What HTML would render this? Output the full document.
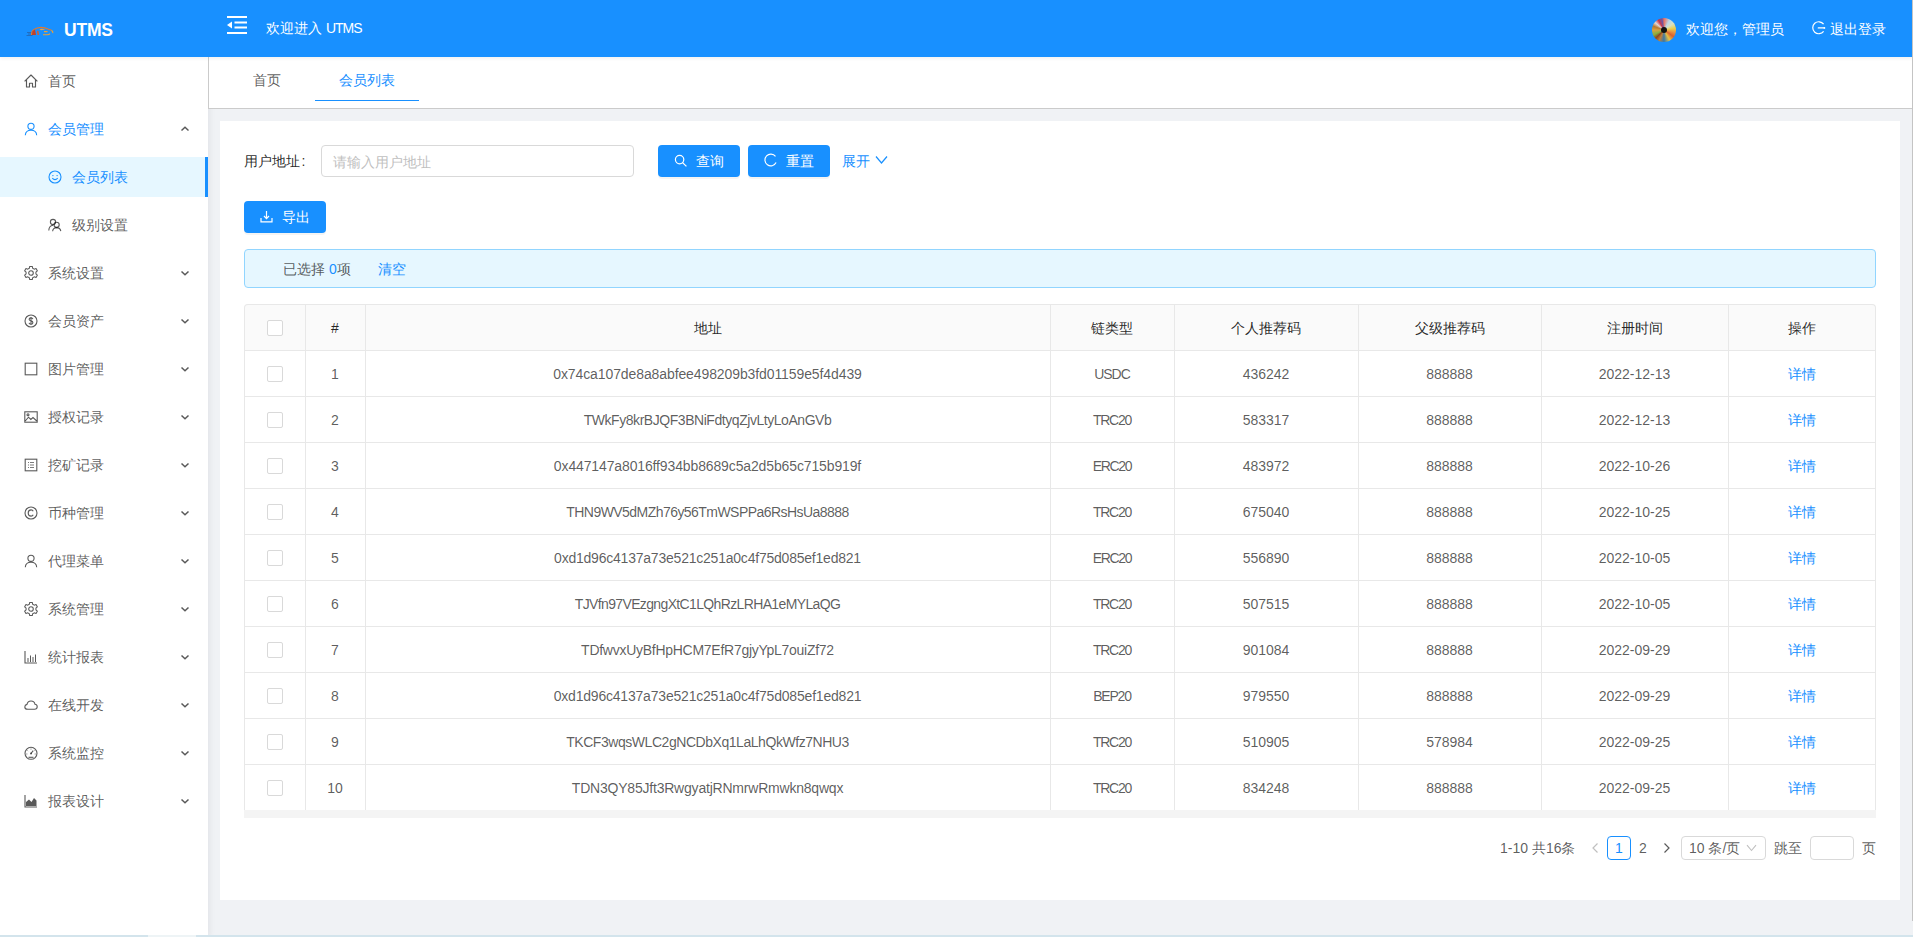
<!DOCTYPE html>
<html><head><meta charset="utf-8">
<style>
*{box-sizing:border-box;margin:0;padding:0}
html,body{width:1913px;height:937px;overflow:hidden}
body{position:relative;background:#f0f2f5;font-family:"Liberation Sans",sans-serif;font-size:14px;color:rgba(0,0,0,.65)}
.a{position:absolute;white-space:nowrap}
#hdr{left:0;top:0;width:1913px;height:57px;background:#1890ff;color:#fff;z-index:3;box-shadow:0 1px 4px rgba(0,21,41,.08)}
#side{left:0;top:57px;width:208px;height:880px;background:#fff;box-shadow:2px 0 6px rgba(0,21,41,.06)}
.mi{position:absolute;left:0;width:208px;height:40px;line-height:40px;font-size:14px;color:rgba(0,0,0,.65)}
.mi svg.ic{position:absolute;left:24px;top:13px;width:14px;height:14px}
.mi .tx{position:absolute;left:48px;top:0}
.mi svg.ar{position:absolute;left:180px;top:16px;width:10px;height:8px;color:rgba(0,0,0,.65)}
.mi.sub svg.ic{left:48px}
.mi.sub .tx{left:72px}
.mi.on{color:#1890ff}
#tabs{left:208px;top:57px;width:1705px;height:52px;background:#fff;border-bottom:1px solid #cbcbcb;border-left:1px solid #cbcbcb}
#card{left:220px;top:121px;width:1680px;height:779px;background:#fff}
.btn{position:absolute;height:32px;background:#1890ff;color:#fff;border-radius:4px;font-size:14px;line-height:32px;box-shadow:0 2px 0 rgba(0,0,0,.045)}
</style></head>
<body>
<div id="hdr" class="a">
  <svg class="a" style="left:26px;top:25px" width="28" height="12" viewBox="0 0 28 12">
    <path d="M1 7.5h5M2 9h5M0.5 10.5h6" stroke="#2a4a80" stroke-width=".7" opacity=".7"/>
    <path d="M5.5 10 Q5.5 6 8 4.5 Q11 2.6 15 2.4 Q19 2.4 22 4 L25.5 5.2" fill="none" stroke="#e07a30" stroke-width="1.2"/>
    <path d="M6 10 L6.5 6 L9 4.6 L10 10 Z" fill="#c0402a"/>
    <path d="M11 6 L11.5 10 L13 10 L12.5 5.8 Z" fill="#e05a28"/>
    <path d="M13.5 4.2 Q16 3.4 19.5 4.5 L15 5.2 Z" fill="#f0a040"/>
    <path d="M18 6.6 h3.5 M17 9.8 h4.5 Q23 9.8 24 8.6 M25.5 5.2 Q27.2 6.5 26.8 8.2" fill="none" stroke="#f0a030" stroke-width="1.1"/>
  </svg>
  <div class="a" style="left:64px;top:18px;font-size:17.5px;font-weight:bold;line-height:24px;letter-spacing:-.2px">UTMS</div>
  <svg class="a" style="left:227px;top:16px" width="20" height="18" viewBox="0 0 20 18">
    <rect x="0" y="0" width="20" height="2" fill="#fff"/>
    <rect x="7.5" y="5.5" width="12.5" height="2" fill="#fff"/>
    <rect x="7.5" y="10.5" width="12.5" height="2" fill="#fff"/>
    <rect x="0" y="16" width="20" height="2" fill="#fff"/>
    <path d="M0 9 L5 5.5 L5 12.5 Z" fill="#fff"/>
  </svg>
  <div class="a" style="left:266px;top:18px;line-height:20px;font-size:14px">欢迎进入 <span style="letter-spacing:-1px">UTMS</span></div>
  <div class="a" style="left:1652px;top:18px;width:24px;height:24px;border-radius:50%;background:conic-gradient(#e87060 0deg,#b8d8e8 30deg,#d8e0c0 55deg,#e8d050 80deg,#e89040 105deg,#d86030 125deg,#e8c040 150deg,#3a78a8 180deg,#c08038 205deg,#904820 225deg,#88b040 245deg,#d8a040 270deg,#b87830 290deg,#e0d8d8 310deg,#c83848 330deg,#6858a8 350deg,#e87060 360deg)"><div class="a" style="left:9px;top:9px;width:6px;height:6px;border-radius:50%;background:#111"></div></div>
  <div class="a" style="left:1686px;top:19px;line-height:20px;font-size:14px">欢迎您，管理员</div>
  <svg class="a" style="left:1812px;top:21px" width="14" height="14" viewBox="0 0 14 14">
    <path d="M11.6 3.2 A6 6 0 1 0 11.6 10.3" fill="none" stroke="#fff" stroke-width="1.2"/>
    <path d="M6.3 6.9 H12.3" fill="none" stroke="#fff" stroke-width="1.3" stroke-linecap="round"/>
    <circle cx="12.4" cy="6.9" r=".9" fill="#fff"/>
  </svg>
  <div class="a" style="left:1830px;top:19px;line-height:20px;font-size:14px">退出登录</div>
</div>

<div id="side" class="a">
<div class="mi" style="top:4px"><svg class="ic" viewBox="0 0 14 14"><path d="M0.6 7.4 L7 1 L13.4 7.4 M2.5 5.6 V13 H5.5 V9.2 H8.5 V13 H11.5 V5.6" fill="none" stroke="currentColor" stroke-width="1.15" stroke-linejoin="round"/></svg><span class="tx">首页</span></div>
<div class="mi on" style="top:52px"><svg class="ic" viewBox="0 0 14 14"><circle cx="7" cy="4.3" r="3.1" fill="none" stroke="currentColor" stroke-width="1.1"/><path d="M1.3 13.2 Q1.6 8.2 7 8.2 Q12.4 8.2 12.7 13.2" fill="none" stroke="currentColor" stroke-width="1.1"/></svg><span class="tx">会员管理</span><svg class="ar" viewBox="0 0 10 8"><path d="M1.5 5.5 L5 2.2 L8.5 5.5" fill="none" stroke="currentColor" stroke-width="1.5"/></svg></div>
<div class="mi sub on" style="top:100px;background:#e6f7ff"><svg class="ic" viewBox="0 0 14 14"><circle cx="7" cy="7" r="6" fill="none" stroke="currentColor" stroke-width="1.1"/><circle cx="4.9" cy="5.6" r=".7" fill="currentColor"/><circle cx="9.1" cy="5.6" r=".7" fill="currentColor"/><path d="M4.3 8.2 Q7 11 9.7 8.2" fill="none" stroke="currentColor" stroke-width="1.1"/></svg><span class="tx">会员列表</span><div class="a" style="left:205px;top:0;width:3px;height:40px;background:#1890ff"></div></div>
<div class="mi sub" style="top:148px"><svg class="ic" viewBox="0 0 14 14"><circle cx="5" cy="4" r="2.6" fill="none" stroke="currentColor" stroke-width="1.1"/><path d="M0.8 12.5 Q1 7.6 5 7.2" fill="none" stroke="currentColor" stroke-width="1.1"/><circle cx="8.6" cy="6.8" r="2.6" fill="none" stroke="currentColor" stroke-width="1.1"/><path d="M4.6 13.2 Q5 9.8 8.6 9.6 Q12.2 9.8 12.8 13.2" fill="none" stroke="currentColor" stroke-width="1.1"/></svg><span class="tx">级别设置</span></div>
<div class="mi" style="top:196px"><svg class="ic" viewBox="0 0 14 14"><path d="M5.29 2.30 L5.72 0.42 L8.28 0.42 L8.71 2.30 L10.21 3.17 L12.06 2.60 L13.33 4.82 L11.92 6.13 L11.92 7.87 L13.33 9.18 L12.06 11.40 L10.21 10.83 L8.71 11.70 L8.28 13.58 L5.72 13.58 L5.29 11.70 L3.79 10.83 L1.94 11.40 L0.67 9.18 L2.08 7.87 L2.08 6.13 L0.67 4.82 L1.94 2.60 L3.79 3.17 Z" fill="none" stroke="currentColor" stroke-width="1.05" stroke-linejoin="round"/><circle cx="7" cy="7" r="2.3" fill="none" stroke="currentColor" stroke-width="1.05"/></svg><span class="tx">系统设置</span><svg class="ar" viewBox="0 0 10 8"><path d="M1.5 2.5 L5 5.8 L8.5 2.5" fill="none" stroke="currentColor" stroke-width="1.5"/></svg></div>
<div class="mi" style="top:244px"><svg class="ic" viewBox="0 0 14 14"><circle cx="7" cy="7" r="6" fill="none" stroke="currentColor" stroke-width="1.1"/><path d="M8.9 5.1 Q8.5 3.9 7 3.9 Q5.1 3.9 5.1 5.3 Q5.1 6.5 7 6.9 Q8.9 7.3 8.9 8.7 Q8.9 10.1 7 10.1 Q5.3 10.1 5 8.8 M7 3 V11" fill="none" stroke="currentColor" stroke-width="1.1"/></svg><span class="tx">会员资产</span><svg class="ar" viewBox="0 0 10 8"><path d="M1.5 2.5 L5 5.8 L8.5 2.5" fill="none" stroke="currentColor" stroke-width="1.5"/></svg></div>
<div class="mi" style="top:292px"><svg class="ic" viewBox="0 0 14 14"><rect x="1.2" y="1.2" width="11.6" height="11.6" fill="none" stroke="currentColor" stroke-width="1.1"/></svg><span class="tx">图片管理</span><svg class="ar" viewBox="0 0 10 8"><path d="M1.5 2.5 L5 5.8 L8.5 2.5" fill="none" stroke="currentColor" stroke-width="1.5"/></svg></div>
<div class="mi" style="top:340px"><svg class="ic" viewBox="0 0 14 14"><rect x="0.8" y="1.8" width="12.4" height="10.4" fill="none" stroke="currentColor" stroke-width="1.1"/><path d="M1.2 11 L4.5 7.2 L6.8 9.5 L9 7.5 L12.8 11" fill="none" stroke="currentColor" stroke-width="1.1"/><circle cx="4" cy="4.8" r="1" fill="none" stroke="currentColor" stroke-width="1.1"/></svg><span class="tx">授权记录</span><svg class="ar" viewBox="0 0 10 8"><path d="M1.5 2.5 L5 5.8 L8.5 2.5" fill="none" stroke="currentColor" stroke-width="1.5"/></svg></div>
<div class="mi" style="top:388px"><svg class="ic" viewBox="0 0 14 14"><rect x="1.2" y="1.2" width="11.6" height="11.6" fill="none" stroke="currentColor" stroke-width="1.1"/><path d="M4 4.5 h1 M6 4.5 h4 M4 7 h1 M6 7 h4 M4 9.5 h1 M6 9.5 h4" stroke="currentColor" stroke-width=".8"/></svg><span class="tx">挖矿记录</span><svg class="ar" viewBox="0 0 10 8"><path d="M1.5 2.5 L5 5.8 L8.5 2.5" fill="none" stroke="currentColor" stroke-width="1.5"/></svg></div>
<div class="mi" style="top:436px"><svg class="ic" viewBox="0 0 14 14"><circle cx="7" cy="7" r="6" fill="none" stroke="currentColor" stroke-width="1.1"/><path d="M9.2 5.2 Q8.7 3.9 7.1 3.9 Q4.2 3.9 4.2 7 Q4.2 10.1 7.1 10.1 Q8.7 10.1 9.2 8.8" fill="none" stroke="currentColor" stroke-width="1.1"/></svg><span class="tx">币种管理</span><svg class="ar" viewBox="0 0 10 8"><path d="M1.5 2.5 L5 5.8 L8.5 2.5" fill="none" stroke="currentColor" stroke-width="1.5"/></svg></div>
<div class="mi" style="top:484px"><svg class="ic" viewBox="0 0 14 14"><circle cx="7" cy="4.3" r="3.1" fill="none" stroke="currentColor" stroke-width="1.1"/><path d="M1.3 13.2 Q1.6 8.2 7 8.2 Q12.4 8.2 12.7 13.2" fill="none" stroke="currentColor" stroke-width="1.1"/></svg><span class="tx">代理菜单</span><svg class="ar" viewBox="0 0 10 8"><path d="M1.5 2.5 L5 5.8 L8.5 2.5" fill="none" stroke="currentColor" stroke-width="1.5"/></svg></div>
<div class="mi" style="top:532px"><svg class="ic" viewBox="0 0 14 14"><path d="M5.29 2.30 L5.72 0.42 L8.28 0.42 L8.71 2.30 L10.21 3.17 L12.06 2.60 L13.33 4.82 L11.92 6.13 L11.92 7.87 L13.33 9.18 L12.06 11.40 L10.21 10.83 L8.71 11.70 L8.28 13.58 L5.72 13.58 L5.29 11.70 L3.79 10.83 L1.94 11.40 L0.67 9.18 L2.08 7.87 L2.08 6.13 L0.67 4.82 L1.94 2.60 L3.79 3.17 Z" fill="none" stroke="currentColor" stroke-width="1.05" stroke-linejoin="round"/><circle cx="7" cy="7" r="2.3" fill="none" stroke="currentColor" stroke-width="1.05"/></svg><span class="tx">系统管理</span><svg class="ar" viewBox="0 0 10 8"><path d="M1.5 2.5 L5 5.8 L8.5 2.5" fill="none" stroke="currentColor" stroke-width="1.5"/></svg></div>
<div class="mi" style="top:580px"><svg class="ic" viewBox="0 0 14 14"><path d="M1 1 V13 H13" fill="none" stroke="currentColor" stroke-width="1.1"/><path d="M4 12 V8 M6.5 12 V5.5 M9 12 V7 M11.5 12 V4.5" stroke="currentColor" stroke-width="1"/></svg><span class="tx">统计报表</span><svg class="ar" viewBox="0 0 10 8"><path d="M1.5 2.5 L5 5.8 L8.5 2.5" fill="none" stroke="currentColor" stroke-width="1.5"/></svg></div>
<div class="mi" style="top:628px"><svg class="ic" viewBox="0 0 14 14"><path d="M3.8 11.3 H10.6 Q13.2 11.3 13.2 8.8 Q13.2 6.6 11 6.3 Q10.4 3 7 3 Q3.6 3 3 6.4 Q0.8 6.9 0.8 9 Q0.8 11.3 3.8 11.3 Z" fill="none" stroke="currentColor" stroke-width="1.1"/></svg><span class="tx">在线开发</span><svg class="ar" viewBox="0 0 10 8"><path d="M1.5 2.5 L5 5.8 L8.5 2.5" fill="none" stroke="currentColor" stroke-width="1.5"/></svg></div>
<div class="mi" style="top:676px"><svg class="ic" viewBox="0 0 14 14"><circle cx="7" cy="7.3" r="6" fill="none" stroke="currentColor" stroke-width="1.1"/><path d="M7 7.5 L9.2 4.6" fill="none" stroke="currentColor" stroke-width="1.1"/><circle cx="7" cy="7.6" r="1" fill="currentColor"/><path d="M3.3 4.5 l.6 .6 M7 2.6 v.9 M10.7 4.5 l-.6 .6 M2.4 8 h.9 M10.7 8 h.9" stroke="currentColor" stroke-width=".9"/><path d="M4.5 11.3 h5" fill="none" stroke="currentColor" stroke-width="1.1"/></svg><span class="tx">系统监控</span><svg class="ar" viewBox="0 0 10 8"><path d="M1.5 2.5 L5 5.8 L8.5 2.5" fill="none" stroke="currentColor" stroke-width="1.5"/></svg></div>
<div class="mi" style="top:724px"><svg class="ic" viewBox="0 0 14 14"><path d="M1 1 V13 H13" fill="none" stroke="currentColor" stroke-width="1.1"/><path d="M2 12 V8 L5 5.5 L7.5 8 L10 4 L12.5 6.5 V12 Z" fill="currentColor"/></svg><span class="tx">报表设计</span><svg class="ar" viewBox="0 0 10 8"><path d="M1.5 2.5 L5 5.8 L8.5 2.5" fill="none" stroke="currentColor" stroke-width="1.5"/></svg></div>
</div>

<div id="tabs" class="a">
  <div class="a" style="left:44px;top:13px;line-height:20px;color:rgba(0,0,0,.65)">首页</div>
  <div class="a" style="left:130px;top:13px;line-height:20px;color:#1890ff">会员列表</div>
  <div class="a" style="left:106px;top:43px;width:104px;height:1px;background:#1890ff"></div>
</div>

<div id="card" class="a">
  <div class="a" style="left:24px;top:30px;line-height:20px;color:rgba(0,0,0,.85)">用户地址<span style="margin-left:1.5px">:</span></div>
  <div class="a" style="left:101px;top:24px;width:313px;height:32px;border:1px solid #d9d9d9;border-radius:4px;background:#fff">
    <span class="a" style="left:11px;top:6px;line-height:20px;color:#bfbfbf">请输入用户地址</span>
  </div>
  <div class="btn" style="left:438px;top:24px;width:82px">
    <svg class="a" style="left:16px;top:9px" width="14" height="14" viewBox="0 0 14 14"><circle cx="5.6" cy="5.6" r="4.2" fill="none" stroke="#fff" stroke-width="1.2"/><path d="M8.6 8.6 L12.4 12.4" stroke="#fff" stroke-width="1.3"/></svg>
    <span class="a" style="left:38px;top:0">查询</span>
  </div>
  <div class="btn" style="left:528px;top:24px;width:82px">
    <svg class="a" style="left:16px;top:8px" width="14" height="14" viewBox="0 0 14 14"><path d="M11.5 3.4 A5.9 5.9 0 1 0 12.1 9.6" fill="none" stroke="#fff" stroke-width="1.15"/></svg>
    <span class="a" style="left:38px;top:0">重置</span>
  </div>
  <div class="a" style="left:622px;top:30px;line-height:20px;color:#1890ff">展开</div>
  <svg class="a" style="left:655px;top:34px" width="13" height="10" viewBox="0 0 13 10"><path d="M1 1.5 L6.5 8 L12 1.5" fill="none" stroke="#1890ff" stroke-width="1.2"/></svg>

  <div class="btn" style="left:24px;top:80px;width:82px">
    <svg class="a" style="left:16px;top:9px" width="13" height="13" viewBox="0 0 13 13"><path d="M6.5 1 V8.3 M4 6 L6.5 8.6 L9 6 M1 8 V11.8 H12 V8" fill="none" stroke="#fff" stroke-width="1.2"/></svg>
    <span class="a" style="left:38px;top:0">导出</span>
  </div>

  <div class="a" style="left:24px;top:128px;width:1632px;height:39px;background:#e6f7ff;border:1px solid #91d5ff;border-radius:4px">
    <span class="a" style="left:38px;top:9px;line-height:20px;color:rgba(0,0,0,.65)">已选择 <span style="color:#1890ff">0</span>项</span>
    <span class="a" style="left:133px;top:9px;line-height:20px;color:#1890ff">清空</span>
  </div>
  <div class="a" style="left:24px;top:183px;width:1632px;height:514px">
  <div class="a" style="left:0;top:0;width:1632px;height:46px;background:#fafafa;border-radius:4px 4px 0 0"></div>
  <div class="a" style="left:0;top:0;width:1632px;height:47px;border:1px solid #e8e8e8;border-bottom:none;border-radius:4px 4px 0 0;z-index:1"></div>
  <div class="a" style="left:0;top:46px;width:1632px;height:1px;background:#e8e8e8"></div>
  <div class="a" style="left:0;top:92px;width:1632px;height:1px;background:#e8e8e8"></div>
  <div class="a" style="left:0;top:138px;width:1632px;height:1px;background:#e8e8e8"></div>
  <div class="a" style="left:0;top:184px;width:1632px;height:1px;background:#e8e8e8"></div>
  <div class="a" style="left:0;top:230px;width:1632px;height:1px;background:#e8e8e8"></div>
  <div class="a" style="left:0;top:276px;width:1632px;height:1px;background:#e8e8e8"></div>
  <div class="a" style="left:0;top:322px;width:1632px;height:1px;background:#e8e8e8"></div>
  <div class="a" style="left:0;top:368px;width:1632px;height:1px;background:#e8e8e8"></div>
  <div class="a" style="left:0;top:414px;width:1632px;height:1px;background:#e8e8e8"></div>
  <div class="a" style="left:0;top:460px;width:1632px;height:1px;background:#e8e8e8"></div>
  <div class="a" style="left:0;top:506px;width:1632px;height:1px;background:#e8e8e8"></div>
  <div class="a" style="left:0px;top:4px;width:1px;height:502px;background:#e8e8e8"></div>
  <div class="a" style="left:61px;top:0;width:1px;height:506px;background:#e8e8e8"></div>
  <div class="a" style="left:121px;top:0;width:1px;height:506px;background:#e8e8e8"></div>
  <div class="a" style="left:806px;top:0;width:1px;height:506px;background:#e8e8e8"></div>
  <div class="a" style="left:930px;top:0;width:1px;height:506px;background:#e8e8e8"></div>
  <div class="a" style="left:1114px;top:0;width:1px;height:506px;background:#e8e8e8"></div>
  <div class="a" style="left:1297px;top:0;width:1px;height:506px;background:#e8e8e8"></div>
  <div class="a" style="left:1484px;top:0;width:1px;height:506px;background:#e8e8e8"></div>
  <div class="a" style="left:1631px;top:4px;width:1px;height:502px;background:#e8e8e8"></div>
  <div class="a" style="left:0;top:506px;width:1632px;height:8px;background:#f4f4f4"></div>
  <div class="a" style="left:23px;top:16px;width:16px;height:16px;border:1px solid #d9d9d9;border-radius:2px;background:#fff"></div>
  <div class="a" style="left:61px;top:14px;width:60px;text-align:center;line-height:20px;color:rgba(0,0,0,.85)">#</div>
  <div class="a" style="left:121px;top:14px;width:685px;text-align:center;line-height:20px;color:rgba(0,0,0,.85)">地址</div>
  <div class="a" style="left:806px;top:14px;width:124px;text-align:center;line-height:20px;color:rgba(0,0,0,.85)">链类型</div>
  <div class="a" style="left:930px;top:14px;width:184px;text-align:center;line-height:20px;color:rgba(0,0,0,.85)">个人推荐码</div>
  <div class="a" style="left:1114px;top:14px;width:183px;text-align:center;line-height:20px;color:rgba(0,0,0,.85)">父级推荐码</div>
  <div class="a" style="left:1297px;top:14px;width:187px;text-align:center;line-height:20px;color:rgba(0,0,0,.85)">注册时间</div>
  <div class="a" style="left:1484px;top:14px;width:148px;text-align:center;line-height:20px;color:rgba(0,0,0,.85)">操作</div>
  <div class="a" style="left:23px;top:62px;width:16px;height:16px;border:1px solid #d9d9d9;border-radius:2px;background:#fff"></div>
  <div class="a" style="left:61px;top:60px;width:60px;text-align:center;line-height:20px;color:rgba(0,0,0,.65)">1</div>
  <div class="a" style="left:121px;top:60px;width:685px;text-align:center;line-height:20px;color:rgba(0,0,0,.65);letter-spacing:-0.1px">0x74ca107de8a8abfee498209b3fd01159e5f4d439</div>
  <div class="a" style="left:806px;top:60px;width:124px;text-align:center;line-height:20px;color:rgba(0,0,0,.65);letter-spacing:-1.0px">USDC</div>
  <div class="a" style="left:930px;top:60px;width:184px;text-align:center;line-height:20px;color:rgba(0,0,0,.65)">436242</div>
  <div class="a" style="left:1114px;top:60px;width:183px;text-align:center;line-height:20px;color:rgba(0,0,0,.65)">888888</div>
  <div class="a" style="left:1297px;top:60px;width:187px;text-align:center;line-height:20px;color:rgba(0,0,0,.65)">2022-12-13</div>
  <div class="a" style="left:1484px;top:60px;width:148px;text-align:center;line-height:20px;color:#1890ff">详情</div>
  <div class="a" style="left:23px;top:108px;width:16px;height:16px;border:1px solid #d9d9d9;border-radius:2px;background:#fff"></div>
  <div class="a" style="left:61px;top:106px;width:60px;text-align:center;line-height:20px;color:rgba(0,0,0,.65)">2</div>
  <div class="a" style="left:121px;top:106px;width:685px;text-align:center;line-height:20px;color:rgba(0,0,0,.65);letter-spacing:-0.45px">TWkFy8krBJQF3BNiFdtyqZjvLtyLoAnGVb</div>
  <div class="a" style="left:806px;top:106px;width:124px;text-align:center;line-height:20px;color:rgba(0,0,0,.65);letter-spacing:-1.3px">TRC20</div>
  <div class="a" style="left:930px;top:106px;width:184px;text-align:center;line-height:20px;color:rgba(0,0,0,.65)">583317</div>
  <div class="a" style="left:1114px;top:106px;width:183px;text-align:center;line-height:20px;color:rgba(0,0,0,.65)">888888</div>
  <div class="a" style="left:1297px;top:106px;width:187px;text-align:center;line-height:20px;color:rgba(0,0,0,.65)">2022-12-13</div>
  <div class="a" style="left:1484px;top:106px;width:148px;text-align:center;line-height:20px;color:#1890ff">详情</div>
  <div class="a" style="left:23px;top:154px;width:16px;height:16px;border:1px solid #d9d9d9;border-radius:2px;background:#fff"></div>
  <div class="a" style="left:61px;top:152px;width:60px;text-align:center;line-height:20px;color:rgba(0,0,0,.65)">3</div>
  <div class="a" style="left:121px;top:152px;width:685px;text-align:center;line-height:20px;color:rgba(0,0,0,.65);letter-spacing:-0.13px">0x447147a8016ff934bb8689c5a2d5b65c715b919f</div>
  <div class="a" style="left:806px;top:152px;width:124px;text-align:center;line-height:20px;color:rgba(0,0,0,.65);letter-spacing:-1.3px">ERC20</div>
  <div class="a" style="left:930px;top:152px;width:184px;text-align:center;line-height:20px;color:rgba(0,0,0,.65)">483972</div>
  <div class="a" style="left:1114px;top:152px;width:183px;text-align:center;line-height:20px;color:rgba(0,0,0,.65)">888888</div>
  <div class="a" style="left:1297px;top:152px;width:187px;text-align:center;line-height:20px;color:rgba(0,0,0,.65)">2022-10-26</div>
  <div class="a" style="left:1484px;top:152px;width:148px;text-align:center;line-height:20px;color:#1890ff">详情</div>
  <div class="a" style="left:23px;top:200px;width:16px;height:16px;border:1px solid #d9d9d9;border-radius:2px;background:#fff"></div>
  <div class="a" style="left:61px;top:198px;width:60px;text-align:center;line-height:20px;color:rgba(0,0,0,.65)">4</div>
  <div class="a" style="left:121px;top:198px;width:685px;text-align:center;line-height:20px;color:rgba(0,0,0,.65);letter-spacing:-0.55px">THN9WV5dMZh76y56TmWSPPa6RsHsUa8888</div>
  <div class="a" style="left:806px;top:198px;width:124px;text-align:center;line-height:20px;color:rgba(0,0,0,.65);letter-spacing:-1.3px">TRC20</div>
  <div class="a" style="left:930px;top:198px;width:184px;text-align:center;line-height:20px;color:rgba(0,0,0,.65)">675040</div>
  <div class="a" style="left:1114px;top:198px;width:183px;text-align:center;line-height:20px;color:rgba(0,0,0,.65)">888888</div>
  <div class="a" style="left:1297px;top:198px;width:187px;text-align:center;line-height:20px;color:rgba(0,0,0,.65)">2022-10-25</div>
  <div class="a" style="left:1484px;top:198px;width:148px;text-align:center;line-height:20px;color:#1890ff">详情</div>
  <div class="a" style="left:23px;top:246px;width:16px;height:16px;border:1px solid #d9d9d9;border-radius:2px;background:#fff"></div>
  <div class="a" style="left:61px;top:244px;width:60px;text-align:center;line-height:20px;color:rgba(0,0,0,.65)">5</div>
  <div class="a" style="left:121px;top:244px;width:685px;text-align:center;line-height:20px;color:rgba(0,0,0,.65);letter-spacing:-0.22px">0xd1d96c4137a73e521c251a0c4f75d085ef1ed821</div>
  <div class="a" style="left:806px;top:244px;width:124px;text-align:center;line-height:20px;color:rgba(0,0,0,.65);letter-spacing:-1.3px">ERC20</div>
  <div class="a" style="left:930px;top:244px;width:184px;text-align:center;line-height:20px;color:rgba(0,0,0,.65)">556890</div>
  <div class="a" style="left:1114px;top:244px;width:183px;text-align:center;line-height:20px;color:rgba(0,0,0,.65)">888888</div>
  <div class="a" style="left:1297px;top:244px;width:187px;text-align:center;line-height:20px;color:rgba(0,0,0,.65)">2022-10-05</div>
  <div class="a" style="left:1484px;top:244px;width:148px;text-align:center;line-height:20px;color:#1890ff">详情</div>
  <div class="a" style="left:23px;top:292px;width:16px;height:16px;border:1px solid #d9d9d9;border-radius:2px;background:#fff"></div>
  <div class="a" style="left:61px;top:290px;width:60px;text-align:center;line-height:20px;color:rgba(0,0,0,.65)">6</div>
  <div class="a" style="left:121px;top:290px;width:685px;text-align:center;line-height:20px;color:rgba(0,0,0,.65);letter-spacing:-0.64px">TJVfn97VEzgngXtC1LQhRzLRHA1eMYLaQG</div>
  <div class="a" style="left:806px;top:290px;width:124px;text-align:center;line-height:20px;color:rgba(0,0,0,.65);letter-spacing:-1.3px">TRC20</div>
  <div class="a" style="left:930px;top:290px;width:184px;text-align:center;line-height:20px;color:rgba(0,0,0,.65)">507515</div>
  <div class="a" style="left:1114px;top:290px;width:183px;text-align:center;line-height:20px;color:rgba(0,0,0,.65)">888888</div>
  <div class="a" style="left:1297px;top:290px;width:187px;text-align:center;line-height:20px;color:rgba(0,0,0,.65)">2022-10-05</div>
  <div class="a" style="left:1484px;top:290px;width:148px;text-align:center;line-height:20px;color:#1890ff">详情</div>
  <div class="a" style="left:23px;top:338px;width:16px;height:16px;border:1px solid #d9d9d9;border-radius:2px;background:#fff"></div>
  <div class="a" style="left:61px;top:336px;width:60px;text-align:center;line-height:20px;color:rgba(0,0,0,.65)">7</div>
  <div class="a" style="left:121px;top:336px;width:685px;text-align:center;line-height:20px;color:rgba(0,0,0,.65);letter-spacing:-0.27px">TDfwvxUyBfHpHCM7EfR7gjyYpL7ouiZf72</div>
  <div class="a" style="left:806px;top:336px;width:124px;text-align:center;line-height:20px;color:rgba(0,0,0,.65);letter-spacing:-1.3px">TRC20</div>
  <div class="a" style="left:930px;top:336px;width:184px;text-align:center;line-height:20px;color:rgba(0,0,0,.65)">901084</div>
  <div class="a" style="left:1114px;top:336px;width:183px;text-align:center;line-height:20px;color:rgba(0,0,0,.65)">888888</div>
  <div class="a" style="left:1297px;top:336px;width:187px;text-align:center;line-height:20px;color:rgba(0,0,0,.65)">2022-09-29</div>
  <div class="a" style="left:1484px;top:336px;width:148px;text-align:center;line-height:20px;color:#1890ff">详情</div>
  <div class="a" style="left:23px;top:384px;width:16px;height:16px;border:1px solid #d9d9d9;border-radius:2px;background:#fff"></div>
  <div class="a" style="left:61px;top:382px;width:60px;text-align:center;line-height:20px;color:rgba(0,0,0,.65)">8</div>
  <div class="a" style="left:121px;top:382px;width:685px;text-align:center;line-height:20px;color:rgba(0,0,0,.65);letter-spacing:-0.2px">0xd1d96c4137a73e521c251a0c4f75d085ef1ed821</div>
  <div class="a" style="left:806px;top:382px;width:124px;text-align:center;line-height:20px;color:rgba(0,0,0,.65);letter-spacing:-1.2px">BEP20</div>
  <div class="a" style="left:930px;top:382px;width:184px;text-align:center;line-height:20px;color:rgba(0,0,0,.65)">979550</div>
  <div class="a" style="left:1114px;top:382px;width:183px;text-align:center;line-height:20px;color:rgba(0,0,0,.65)">888888</div>
  <div class="a" style="left:1297px;top:382px;width:187px;text-align:center;line-height:20px;color:rgba(0,0,0,.65)">2022-09-29</div>
  <div class="a" style="left:1484px;top:382px;width:148px;text-align:center;line-height:20px;color:#1890ff">详情</div>
  <div class="a" style="left:23px;top:430px;width:16px;height:16px;border:1px solid #d9d9d9;border-radius:2px;background:#fff"></div>
  <div class="a" style="left:61px;top:428px;width:60px;text-align:center;line-height:20px;color:rgba(0,0,0,.65)">9</div>
  <div class="a" style="left:121px;top:428px;width:685px;text-align:center;line-height:20px;color:rgba(0,0,0,.65);letter-spacing:-0.45px">TKCF3wqsWLC2gNCDbXq1LaLhQkWfz7NHU3</div>
  <div class="a" style="left:806px;top:428px;width:124px;text-align:center;line-height:20px;color:rgba(0,0,0,.65);letter-spacing:-1.3px">TRC20</div>
  <div class="a" style="left:930px;top:428px;width:184px;text-align:center;line-height:20px;color:rgba(0,0,0,.65)">510905</div>
  <div class="a" style="left:1114px;top:428px;width:183px;text-align:center;line-height:20px;color:rgba(0,0,0,.65)">578984</div>
  <div class="a" style="left:1297px;top:428px;width:187px;text-align:center;line-height:20px;color:rgba(0,0,0,.65)">2022-09-25</div>
  <div class="a" style="left:1484px;top:428px;width:148px;text-align:center;line-height:20px;color:#1890ff">详情</div>
  <div class="a" style="left:23px;top:476px;width:16px;height:16px;border:1px solid #d9d9d9;border-radius:2px;background:#fff"></div>
  <div class="a" style="left:61px;top:474px;width:60px;text-align:center;line-height:20px;color:rgba(0,0,0,.65)">10</div>
  <div class="a" style="left:121px;top:474px;width:685px;text-align:center;line-height:20px;color:rgba(0,0,0,.65);letter-spacing:-0.21px">TDN3QY85Jft3RwgyatjRNmrwRmwkn8qwqx</div>
  <div class="a" style="left:806px;top:474px;width:124px;text-align:center;line-height:20px;color:rgba(0,0,0,.65);letter-spacing:-1.3px">TRC20</div>
  <div class="a" style="left:930px;top:474px;width:184px;text-align:center;line-height:20px;color:rgba(0,0,0,.65)">834248</div>
  <div class="a" style="left:1114px;top:474px;width:183px;text-align:center;line-height:20px;color:rgba(0,0,0,.65)">888888</div>
  <div class="a" style="left:1297px;top:474px;width:187px;text-align:center;line-height:20px;color:rgba(0,0,0,.65)">2022-09-25</div>
  <div class="a" style="left:1484px;top:474px;width:148px;text-align:center;line-height:20px;color:#1890ff">详情</div>
  </div>
  <div class="a" style="left:1280px;top:717px;line-height:20px">1-10 共16条</div>
  <svg class="a" style="left:1370px;top:721px" width="10" height="12" viewBox="0 0 10 12"><path d="M7.5 1.5 L3 6 L7.5 10.5" fill="none" stroke="rgba(0,0,0,.25)" stroke-width="1.2"/></svg>
  <div class="a" style="left:1387px;top:715px;width:24px;height:24px;border:1px solid #1890ff;border-radius:4px;text-align:center;line-height:22px;color:#1890ff">1</div>
  <div class="a" style="left:1412px;top:715px;width:22px;height:24px;text-align:center;line-height:24px;color:rgba(0,0,0,.65)">2</div>
  <svg class="a" style="left:1442px;top:721px" width="10" height="12" viewBox="0 0 10 12"><path d="M2.5 1.5 L7 6 L2.5 10.5" fill="none" stroke="rgba(0,0,0,.65)" stroke-width="1.2"/></svg>
  <div class="a" style="left:1461px;top:715px;width:85px;height:24px;border:1px solid #d9d9d9;border-radius:4px">
    <span class="a" style="left:7px;top:1px;line-height:20px">10 条/页</span>
    <svg class="a" style="left:64px;top:7px" width="11" height="8" viewBox="0 0 11 8"><path d="M1 1.2 L5.5 6.5 L10 1.2" fill="none" stroke="rgba(0,0,0,.25)" stroke-width="1.1"/></svg>
  </div>
  <div class="a" style="left:1554px;top:717px;line-height:20px">跳至</div>
  <div class="a" style="left:1590px;top:715px;width:44px;height:24px;border:1px solid #d9d9d9;border-radius:4px"></div>
  <div class="a" style="left:1642px;top:717px;line-height:20px">页</div>
</div>
<div class="a" style="left:1912px;top:0;width:1px;height:921px;background:#c4c4c4;z-index:5"></div>
<div class="a" style="left:0;top:935px;width:1913px;height:2px;background:#d3e4ec;z-index:5"></div>
<div class="a" style="left:148px;top:935px;width:48px;height:2px;background:#eef4f6;z-index:5"></div>
</body></html>
